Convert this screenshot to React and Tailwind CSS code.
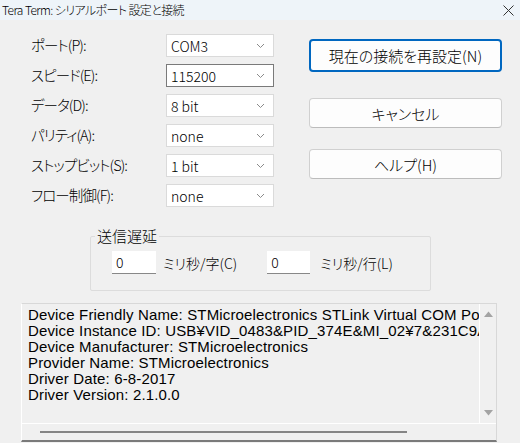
import React from 'react';

const jp = { fontFamily: '"Noto Sans CJK JP", "Noto Sans", sans-serif' };

function Chevron() {
  return (
    <svg width="9" height="6" viewBox="0 0 9 6" className="shrink-0">
      <path d="M1 1 L4.5 4.5 L8 1" fill="none" stroke="#8a8a8a" strokeWidth="1" />
    </svg>
  );
}

function Select({ value, focused }) {
  return (
    <div
      className={`flex items-center justify-between w-[108px] h-[23px] bg-white pl-[4px] pr-[8px] border ${
        focused ? 'border-[#7a7a7a]' : 'border-[#dadada]'
      }`}
    >
      <span className="text-[14px] leading-none text-black">{value}</span>
      <Chevron />
    </div>
  );
}

function Button({ children, primary, className = '' }) {
  return (
    <button
      className={`w-[193px] rounded-[4px] bg-[#fdfdfd] text-[15px] leading-none text-black flex items-center justify-center ${
        primary ? 'h-[33px] border-2 border-[#0067c0]' : 'h-[30px] border border-[#d0d0d0] border-b-[#bcbcbc]'
      } ${className}`}
    >
      {children}
    </button>
  );
}

const rows = [
  { label: 'ポート(P):', value: 'COM3' },
  { label: 'スピード(E):', value: '115200', focused: true },
  { label: 'データ(D):', value: '8 bit' },
  { label: 'パリティ(A):', value: 'none' },
  { label: 'ストップビット(S):', value: '1 bit' },
  { label: 'フロー制御(F):', value: 'none' },
];

const info = [
  'Device Friendly Name: STMicroelectronics STLink Virtual COM Port (COM3)',
  'Device Instance ID: USB¥VID_0483&PID_374E&MI_02¥7&231C9A35&0&0002',
  'Device Manufacturer: STMicroelectronics',
  'Provider Name: STMicroelectronics',
  'Driver Date: 6-8-2017',
  'Driver Version: 2.1.0.0',
];

export default function App() {
  return (
    <div
      className="w-[520px] h-[443px] bg-[#f0f0f0] overflow-hidden text-black font-light [font-feature-settings:'palt'_1] [font-kerning:normal]"
      style={jp}
    >
      {/* Title bar */}
      <div className="h-[20px] bg-[#eef4f9] flex items-center justify-between pl-[2px] pr-[6px]">
        <span className="text-[12px] leading-none tracking-[-0.6px]">Tera Term: シリアルポート 設定と接続</span>
        <svg width="11" height="11" viewBox="0 0 11 11">
          <path d="M0.5 0.5 L10.5 10.5 M10.5 0.5 L0.5 10.5" stroke="#333" strokeWidth="1" />
        </svg>
      </div>

      <div className="flex items-start">
        {/* Left form */}
        <div className="pl-[31px] pt-[14px] flex flex-col gap-[7px]">
          {rows.map((r) => (
            <div key={r.label} className="flex items-center h-[23px]">
              <span className="w-[135px] text-[14.5px] leading-none tracking-[-0.9px]">{r.label}</span>
              <Select value={r.value} focused={r.focused} />
            </div>
          ))}
        </div>

        {/* Right buttons */}
        <div className="ml-[35px] pt-[19px] flex flex-col">
          <Button primary>現在の接続を再設定(N)</Button>
          <Button className="mt-[26px]">キャンセル</Button>
          <Button className="mt-[21px]">ヘルプ(H)</Button>
        </div>
      </div>

      {/* Send delay group */}
      <fieldset className="ml-[90px] mt-[20px] w-[341px] h-[64px] border border-[#dcdcdc] rounded-[2px] px-0">
        <legend className="px-[2px] ml-[4px] text-[15px] leading-[18px]">送信遅延</legend>
        <div className="flex items-center pl-[21px] pt-[6px] text-[14px]">
          <div className="w-[44px] h-[23px] bg-white border-b border-b-[#888] flex items-center pl-[4px] leading-none">0</div>
          <span className="ml-[7px] leading-none">ミリ秒/字(C)</span>
          <div className="ml-[30px] w-[43px] h-[23px] bg-white border-b border-b-[#888] flex items-center pl-[4px] leading-none">0</div>
          <span className="ml-[10px] leading-none">ミリ秒/行(L)</span>
        </div>
      </fieldset>

      {/* Device info text area */}
      <div className="ml-[21px] mt-[12px] w-[476px] h-[139px] border-t border-l border-t-[#d8d8d8] border-l-white border-r border-r-[#d8d8d8] border-b-2 border-b-[#7a7a7a] flex flex-col">
        <div className="flex h-[120px] border-b border-b-white">
          <div
            className="flex-1 overflow-hidden pl-[6px] pt-[3px] text-[15px] leading-[16px] whitespace-nowrap font-normal tracking-[0.15px]"
            style={{ fontFamily: '"Liberation Sans", Arial, sans-serif' }}
          >
            {info.map((l) => (
              <div key={l}>{l}</div>
            ))}
          </div>
          <div className="w-[17px] border-l border-l-white flex flex-col items-center justify-between py-[7px]">
            <svg width="9" height="6" viewBox="0 0 9 6">
              <path d="M0 6 L4.5 0.5 L9 6 Z" fill="#a3a3a3" />
            </svg>
            <svg width="9" height="6" viewBox="0 0 9 6">
              <path d="M0 0 L4.5 5.5 L9 0 Z" fill="#a3a3a3" />
            </svg>
          </div>
        </div>
        <div className="flex-1 flex items-center pl-[18px]">
          <div className="w-[367px] h-[2px] bg-[#858585]" />
        </div>
      </div>
    </div>
  );
}
